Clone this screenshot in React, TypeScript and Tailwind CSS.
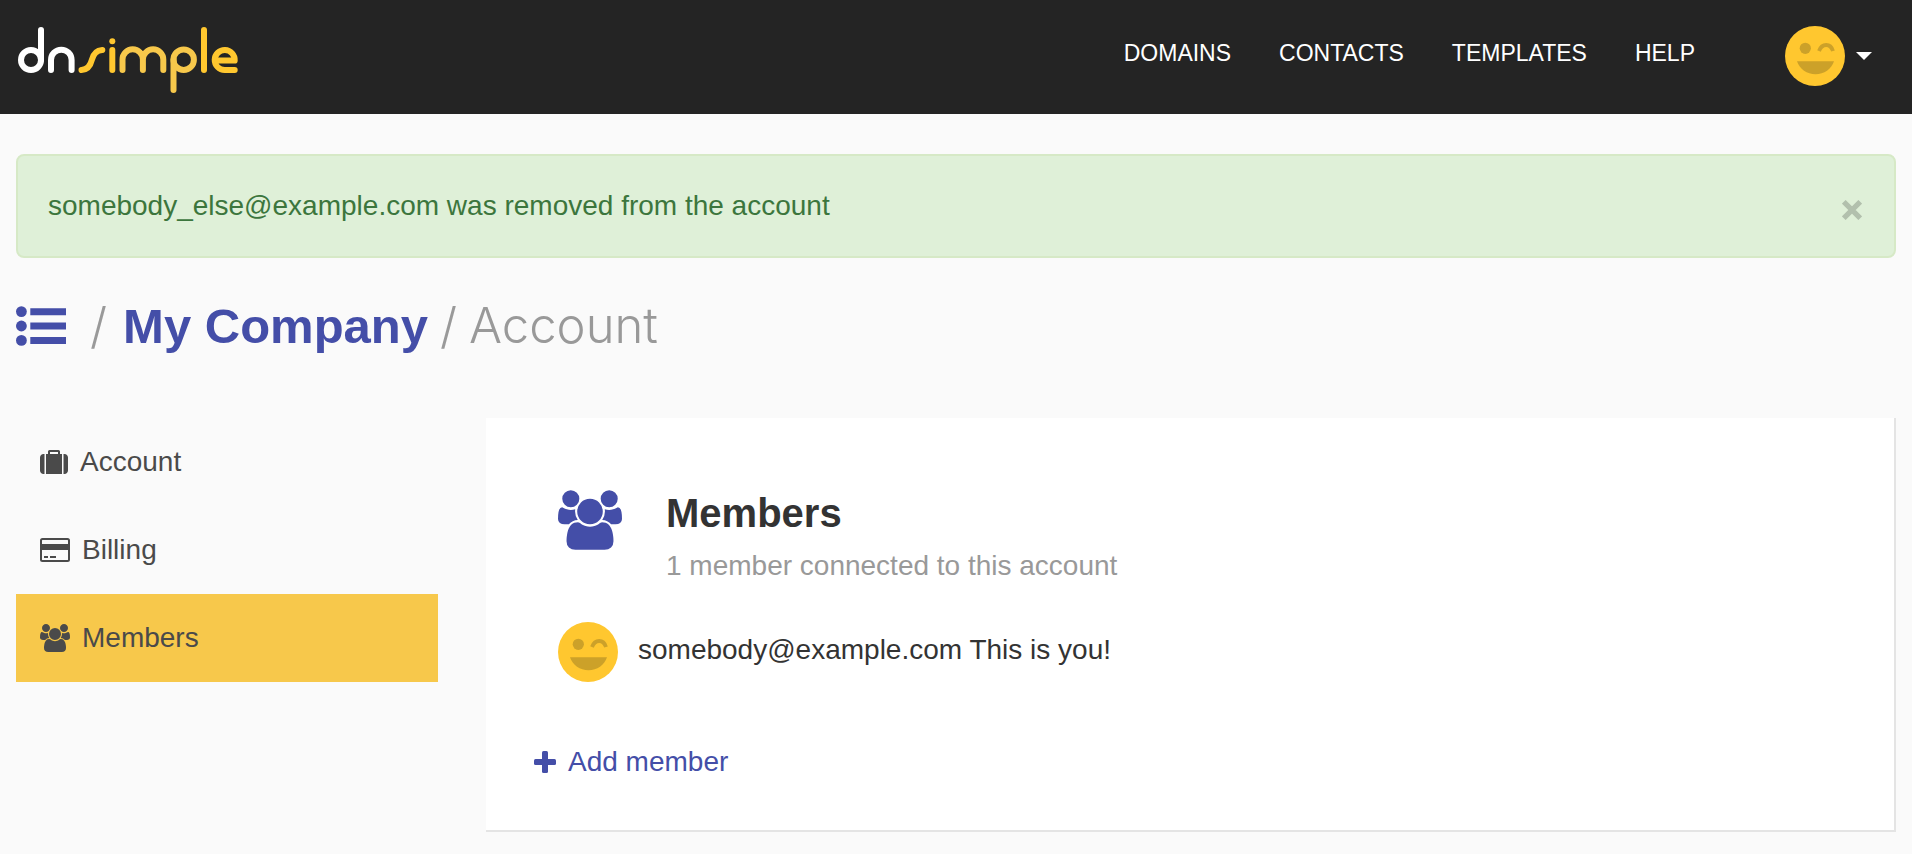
import React from "react";

function Logo() {
  return (
    <svg className="h-[72px] w-[224px]" viewBox="16 21 224 72" fill="none" strokeWidth="6" strokeLinecap="round" strokeLinejoin="round" role="img" aria-label="dnsimple">
      <g stroke="#ffffff">
        <circle cx="31" cy="60" r="10" />
        <path d="M41 30V60" />
        <path d="M51 70V60a10.3 10.3 0 0 1 20.6 0V70" />
      </g>
      <g stroke="#ffc72f">
        <path d="M81.500 70Q89.500 69.500 91.800 60T102.300 50" />
        <path d="M112.3 50V70" />
        <path d="M204 30V70" />
        <path d="M234.700 70H224.700a10 10 0 1 1 10-9.500H219" />
      </g>
      <circle cx="112.300" cy="41.300" r="3" fill="#ffc72f" />
      <g stroke="#f7c84b">
        <path d="M122.500 70V59.500a10.200 10.200 0 0 1 20.400 0V70M142.900 59.500a10.200 10.200 0 0 1 20.400 0V70" />
        <path d="M173.500 90V59.700" />
        <circle cx="183.700" cy="59.700" r="10.200" />
      </g>
    </svg>
  );
}

function Avatar() {
  return (
    <svg className="size-[60px] shrink-0" viewBox="0 0 60 60" aria-hidden="true">
      <circle cx="30" cy="30" r="30" fill="#ffc72f" />
      <g fill="#cca129">
        <circle cx="20.300" cy="22.300" r="5.600" />
        <path d="M12 35.300H49C46.500 43 39 48.300 30.500 48.300S14.500 43 12 35.300Z" />
      </g>
      <path d="M34 25C37 17 45.500 17 48 25" fill="none" stroke="#cca129" strokeWidth="3.800" />
    </svg>
  );
}

function UsersIcon({ className }: { className: string }) {
  return (
    <svg className={className} viewBox="0 0 1920 1792" fill="currentColor" aria-hidden="true">
      <path d="M593 896q-162 5-265 128h-134q-82 0-138-40.5t-56-118.5q0-353 124-353 6 0 43.5 21t97.5 42.5 119 21.5q67 0 133-23-5 37-5 66 0 139 81 256zm1071 637q0 120-73 189.500t-194 69.500h-874q-121 0-194-69.500t-73-189.500q0-53 3.500-103.500t14-109 26.500-108.500 43-97.500 62-81 85.500-53.500 111.500-20q10 0 43 21.500t73 48 107 48 135 21.500 135-21.500 107-48 73-48 43-21.500q61 0 111.500 20t85.500 53.500 62 81 43 97.500 26.500 108.500 14 109 3.500 103.500zm-1024-1277q0 106-75 181t-181 75-181-75-75-181 75-181 181-75 181 75 75 181zm704 384q0 159-112.500 271.500t-271.500 112.500-271.500-112.500-112.500-271.500 112.500-271.500 271.500-112.500 271.500 112.500 112.500 271.500zm576 225q0 78-56 118.500t-138 40.500h-134q-103-123-265-128 81-117 81-256 0-29-5-66 66 23 133 23 59 0 119-21.500t97.500-42.500 43.500-21q124 0 124 353zm-128-609q0 106-75 181t-181 75-181-75-75-181 75-181 181-75 181 75 75 181z" />
    </svg>
  );
}

function SuitcaseIcon() {
  return (
    <svg className="h-6 w-7" viewBox="0 0 1792 1536" fill="currentColor" aria-hidden="true">
      <path d="M640 256h512v-128h-512v128zm-352 0v1280h-64q-92 0-158-66t-66-158v-832q0-92 66-158t158-66h64zm1120 0v1280h-1024v-1280h128v-160q0-40 28-68t68-28h576q40 0 68 28t28 68v160h128zm384 224v832q0 92-66 158t-158 66h-64v-1280h64q92 0 158 66t66 158z" />
    </svg>
  );
}

function CardIcon() {
  return (
    <svg className="h-6 w-[30px]" viewBox="0 0 30 24" fill="currentColor" aria-hidden="true">
      <rect x="1" y="1" width="28" height="22" rx="1.500" fill="none" stroke="currentColor" strokeWidth="2" />
      <path d="M1 6h28v6H1zM4 18h4v2H4zM10 18h6v2h-6z" />
    </svg>
  );
}

function ListIcon() {
  return (
    <svg className="h-10 w-[50px]" viewBox="0 0 50 40" fill="currentColor" aria-hidden="true">
      <circle cx="5.400" cy="5.600" r="5.400" />
      <circle cx="5.400" cy="20" r="5.400" />
      <circle cx="5.400" cy="34.400" r="5.400" />
      <path d="M14.300 2.200H50v7H14.300zM14.300 16.600H50v7H14.300zM14.300 31H50v7H14.300z" />
    </svg>
  );
}

const navLinks = ["Domains", "Contacts", "Templates", "Help"];

const sections = [
  { label: "Account", icon: <SuitcaseIcon />, current: false },
  { label: "Billing", icon: <CardIcon />, current: false },
  { label: "Members", icon: <UsersIcon className="h-7 w-[30px]" />, current: true },
];

export default function App() {
  return (
    <div className="min-h-screen bg-[#fafafa] font-['Liberation_Sans',Arial,sans-serif] text-[28px] leading-10 text-[#333333]">
      <header className="flex h-[114px] items-center justify-between bg-[#242424] pr-10 pl-4">
        <a href="#">
          <Logo />
        </a>
        <div className="flex items-center pb-0.5">
          <nav className="flex gap-12 pb-1.5 text-[23px] text-white uppercase">
            {navLinks.map((label) => (
              <a key={label} href="#">
                {label}
              </a>
            ))}
          </nav>
          <button type="button" aria-label="User menu" className="ml-[90px] flex items-center gap-[11px]">
            <Avatar />
            <svg className="h-2 w-4" viewBox="0 0 16 8" aria-hidden="true">
              <path d="M0 0h16L8 8z" fill="#ffffff" />
            </svg>
          </button>
        </div>
      </header>

      <main className="px-4 pt-10">
        <div role="alert" className="flex h-[104px] items-center justify-between rounded-lg border-2 border-[#d6e9c6] bg-[#dff0d8] pr-8 pl-[30px] text-[#3c763d]">
          <p>somebody_else@example.com was removed from the account</p>
          <button type="button" aria-label="Close" className="pt-2">
            <svg className="size-5" viewBox="0 0 20 20" aria-hidden="true">
              <path d="M1.800 1.800L18.200 18.200M18.200 1.800L1.800 18.200" stroke="#b2c0ad" strokeWidth="5.200" />
            </svg>
          </button>
        </div>

        <h1 className="mt-9 flex h-16 items-center text-[49px] leading-[64px]">
          <a href="#" aria-label="Accounts" className="text-[#444ea8]">
            <ListIcon />
          </a>
          <span className="ml-6 font-['Inter',sans-serif] font-light text-[#999999]">/</span>
          <a href="#" className="ml-4 font-bold text-[#444ea8]">
            My Company
          </a>
          <span className="ml-3 font-['Inter',sans-serif] font-light text-[#999999]">/</span>
          <span className="ml-3 font-['Inter',sans-serif] font-light text-[#999999]">Account</span>
        </h1>

        <div className="mt-[60px] grid grid-cols-[minmax(0,422fr)_minmax(0,1410fr)] items-start gap-12">
          <nav aria-label="Account sections">
            {sections.map(({ label, icon, current }) => (
              <a
                key={label}
                href="#"
                aria-current={current ? "page" : undefined}
                className="flex h-[88px] items-center gap-3 pl-6 text-[#4a4a4a] aria-[current=page]:bg-[#f7c84b]"
              >
                {icon}
                {label}
              </a>
            ))}
          </nav>

          <section className="border-r-2 border-b-2 border-[#e4e4e4] bg-white px-12 pt-[70px] pb-12">
            <div className="flex gap-11 pl-6">
              <UsersIcon className="mt-0.5 h-[60px] w-16 text-[#444ea8]" />
              <div>
                <h2 className="text-[40px] leading-[50px] font-bold">Members</h2>
                <p className="mt-2 text-[#999999]">1 member connected to this account</p>
              </div>
            </div>
            <div className="mt-9 flex items-center gap-5 pl-6">
              <Avatar />
              <p className="pb-1">somebody@example.com This is you!</p>
            </div>
            <a href="#" className="mt-[60px] flex items-center gap-3 text-[#444ea8]">
              <svg className="size-[22px]" viewBox="0 0 22 22" fill="currentColor" aria-hidden="true">
                <rect x="8" y="0" width="6" height="22" rx="1.500" />
                <rect x="0" y="8" width="22" height="6" rx="1.500" />
              </svg>
              Add member
            </a>
          </section>
        </div>
      </main>
    </div>
  );
}
